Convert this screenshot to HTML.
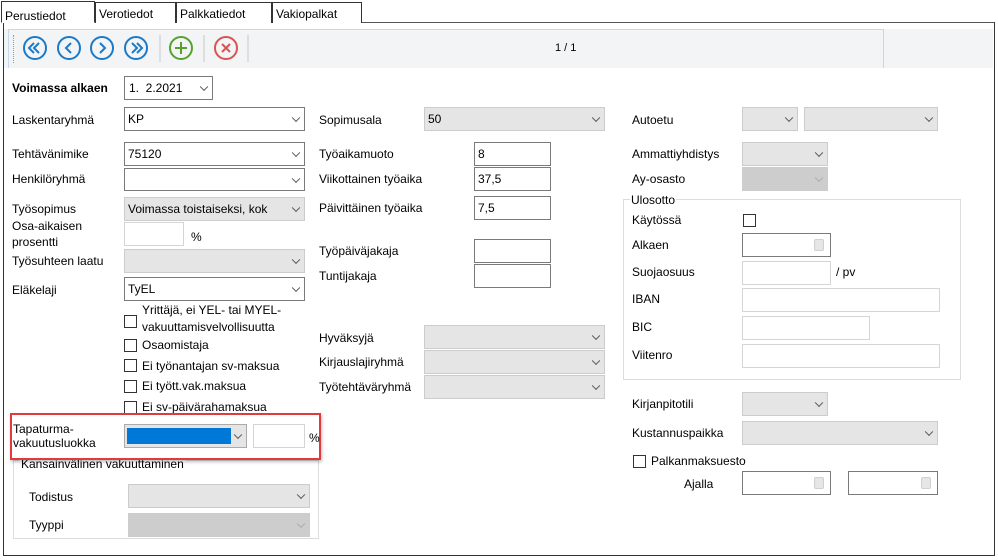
<!DOCTYPE html>
<html><head><meta charset="utf-8"><style>
*{box-sizing:border-box;margin:0;padding:0}
body{width:998px;height:560px;background:#fff;position:relative;overflow:hidden;font-family:"Liberation Sans",Arial,sans-serif;font-size:12px;color:#000}
div,span,i{position:absolute}
.l{white-space:nowrap;line-height:14px}
.b{border:1px solid #7a7a7a;background:#fff}
.d{border:1px solid #cccccc;background:#e5e5e5}
.dd{border:1px solid #cccccc;background:#cdcdcd}
.t{border:1px solid #7a7a7a;background:#fff}
.tl{border:1px solid #d5d5d5;background:#fff}
.v{right:5px;top:50%;width:6px;height:6px;border-right:1px solid #555;border-bottom:1px solid #555;transform:translateY(-70%) rotate(45deg)}
.dd .v{border-color:#aaa}
.x{left:3px;top:4px;line-height:14px;white-space:nowrap}
.c{width:13px;height:13px;border:1px solid #333;background:#fff}
.tab{top:2px;height:21px;border:1px solid #333;border-bottom:none;padding:4px 3px;background:#fff}
.cal{right:6px;top:5px;width:10px;height:12px;background:#e6e6e6;border:1px solid #d0d0d0;border-radius:2px}
</style></head><body>
<div style="left:3px;top:22px;width:992px;height:534px;border:1px solid #333;border-top:1px solid #555"></div>
<div class="tab" style="left:1px;top:1px;width:94px;height:22px;border-bottom:1px solid #fff;padding-top:7px">Perustiedot</div>
<div class="tab" style="left:95px;width:81px">Verotiedot</div>
<div class="tab" style="left:176px;width:96px">Palkkatiedot</div>
<div class="tab" style="left:272px;width:90px">Vakiopalkat</div>
<div style="left:4px;top:29px;width:989px;height:39px;background:#f3f4f6"></div>
<div style="left:8px;top:29px;width:876px;height:39px;border:1px solid #c6d6ec;border-bottom:none;background:#f3f4f6"></div>
<div style="left:13px;top:35px;height:28px;border-left:1px dotted #999"></div>
<svg style="position:absolute;left:0;top:0" width="998" height="80">
<g fill="none" stroke="#1a7ac8" stroke-width="2">
<circle cx="35" cy="48" r="11"/><circle cx="69" cy="48" r="11"/><circle cx="102" cy="48" r="11"/><circle cx="136" cy="48" r="11"/>
<path d="M34 43l-5 5 5 5M39 43l-5 5 5 5"/>
<path d="M71 43l-5 5 5 5"/>
<path d="M100 43l5 5-5 5"/>
<path d="M132 43l5 5-5 5M137 43l5 5-5 5"/>
</g>
<circle cx="181" cy="48" r="11" fill="none" stroke="#5aa02c" stroke-width="2"/>
<path d="M181 42v12M175 48h12" stroke="#5aa02c" stroke-width="2"/>
<circle cx="226" cy="48" r="11" fill="none" stroke="#d9534f" stroke-width="2"/>
<path d="M222 44l8 8M230 44l-8 8" stroke="#d9534f" stroke-width="2"/>
<path d="M160 35v27M204 35v27M248 35v27" stroke="#c8c8c8" stroke-width="1"/>
</svg>
<span class="l" style="left:555px;top:41px;font-size:11px">1 / 1</span>

<span class="l" style="left:12px;top:81px;font-weight:bold">Voimassa alkaen</span>
<div class="b" style="left:124px;top:76px;width:89px;height:24px"><span class="x" style="left:4px;top:4px">1.&nbsp; 2.2021</span><i class="v"></i></div>
<span class="l" style="left:12px;top:113px">Laskentaryhmä</span>
<div class="b" style="left:124px;top:107px;width:181px;height:24px"><span class="x">KP</span><i class="v"></i></div>
<span class="l" style="left:12px;top:147px">Tehtävänimike</span>
<div class="b" style="left:124px;top:142px;width:181px;height:24px"><span class="x">75120</span><i class="v"></i></div>
<span class="l" style="left:12px;top:172px">Henkilöryhmä</span>
<div class="b" style="left:124px;top:168px;width:181px;height:23px"><i class="v"></i></div>
<span class="l" style="left:12px;top:202px">Työsopimus</span>
<div class="d" style="left:124px;top:197px;width:181px;height:24px"><span class="x">Voimassa toistaiseksi, kok</span><i class="v"></i></div>
<span class="l" style="left:12px;top:219px">Osa-aikaisen</span>
<span class="l" style="left:12px;top:235px">prosentti</span>
<div class="tl" style="left:124px;top:222px;width:60px;height:24px"></div>
<span class="l" style="left:191px;top:230px">%</span>
<span class="l" style="left:12px;top:254px">Työsuhteen laatu</span>
<div class="d" style="left:124px;top:249px;width:181px;height:24px"><i class="v"></i></div>
<span class="l" style="left:12px;top:283px">Eläkelaji</span>
<div class="b" style="left:124px;top:277px;width:181px;height:24px"><span class="x">TyEL</span><i class="v"></i></div>
<div class="c" style="left:124px;top:315px"></div>
<span class="l" style="left:142px;top:303px">Yrittäjä, ei YEL- tai MYEL-</span>
<span class="l" style="left:142px;top:320px">vakuuttamisvelvollisuutta</span>
<div class="c" style="left:124px;top:339px"></div><span class="l" style="left:142px;top:338px">Osaomistaja</span>
<div class="c" style="left:124px;top:359px"></div><span class="l" style="left:142px;top:359px">Ei työnantajan sv-maksua</span>
<div class="c" style="left:124px;top:380px"></div><span class="l" style="left:142px;top:379px">Ei tyött.vak.maksua</span>
<div class="c" style="left:124px;top:401px"></div><span class="l" style="left:142px;top:400px">Ei sv-päivärahamaksua</span>

<div style="left:13px;top:460px;width:306px;height:79px;border:1px solid #dcdcdc"></div>
<span class="l" style="left:19px;top:457px;background:#fff;padding:0 2px">Kansainvälinen vakuuttaminen</span>
<div style="left:10px;top:413px;width:311px;height:47px;border:2px solid #e0393e;background:#fff;box-shadow:1px 2px 3px rgba(0,0,0,.25)"></div>
<span class="l" style="left:13px;top:422px">Tapaturma-</span>
<span class="l" style="left:13px;top:436px">vakuutusluokka</span>
<div class="d" style="left:124px;top:424px;width:123px;height:24px;border-color:#aaa"><div style="left:2px;top:3px;width:104px;height:16px;background:#0078d7"></div><i class="v"></i></div>
<div class="tl" style="left:253px;top:424px;width:52px;height:24px"></div>
<span class="l" style="left:309px;top:431px">%</span>
<span class="l" style="left:29px;top:490px">Todistus</span>
<div class="d" style="left:128px;top:484px;width:182px;height:24px"><i class="v"></i></div>
<span class="l" style="left:29px;top:518px">Tyyppi</span>
<div class="dd" style="left:128px;top:513px;width:182px;height:24px"><i class="v"></i></div>

<span class="l" style="left:319px;top:113px">Sopimusala</span>
<div class="d" style="left:424px;top:107px;width:181px;height:24px"><span class="x">50</span><i class="v"></i></div>
<span class="l" style="left:319px;top:147px">Työaikamuoto</span>
<div class="t" style="left:474px;top:142px;width:77px;height:24px"><span class="x">8</span></div>
<span class="l" style="left:319px;top:172px">Viikottainen työaika</span>
<div class="t" style="left:474px;top:167px;width:77px;height:24px"><span class="x">37,5</span></div>
<span class="l" style="left:319px;top:201px">Päivittäinen työaika</span>
<div class="t" style="left:474px;top:196px;width:77px;height:24px"><span class="x">7,5</span></div>
<span class="l" style="left:319px;top:244px">Työpäiväjakaja</span>
<div class="t" style="left:474px;top:239px;width:77px;height:24px"></div>
<span class="l" style="left:319px;top:269px">Tuntijakaja</span>
<div class="t" style="left:474px;top:264px;width:77px;height:24px"></div>
<span class="l" style="left:319px;top:331px">Hyväksyjä</span>
<div class="d" style="left:424px;top:325px;width:181px;height:24px"><i class="v"></i></div>
<span class="l" style="left:319px;top:355px">Kirjauslajiryhmä</span>
<div class="d" style="left:424px;top:350px;width:181px;height:24px"><i class="v"></i></div>
<span class="l" style="left:319px;top:380px">Työtehtäväryhmä</span>
<div class="d" style="left:424px;top:375px;width:181px;height:24px"><i class="v"></i></div>

<span class="l" style="left:632px;top:113px">Autoetu</span>
<div class="d" style="left:742px;top:107px;width:56px;height:24px"><i class="v"></i></div>
<div class="d" style="left:804px;top:107px;width:134px;height:24px"><i class="v"></i></div>
<span class="l" style="left:632px;top:147px">Ammattiyhdistys</span>
<div class="d" style="left:742px;top:142px;width:86px;height:24px"><i class="v"></i></div>
<span class="l" style="left:632px;top:172px">Ay-osasto</span>
<div class="dd" style="left:742px;top:167px;width:86px;height:24px"><i class="v"></i></div>
<div style="left:623px;top:199px;width:338px;height:181px;border:1px solid #dcdcdc"></div>
<span class="l" style="left:630px;top:193px;background:#fff;padding:0 1px">Ulosotto</span>
<span class="l" style="left:632px;top:213px">Käytössä</span>
<div class="c" style="left:743px;top:214px"></div>
<span class="l" style="left:632px;top:238px">Alkaen</span>
<div class="t" style="left:742px;top:233px;width:89px;height:24px"><i class="cal"></i></div>
<span class="l" style="left:632px;top:265px">Suojaosuus</span>
<div class="tl" style="left:742px;top:261px;width:89px;height:24px"></div>
<span class="l" style="left:836px;top:265px">/ pv</span>
<span class="l" style="left:632px;top:292px">IBAN</span>
<div class="tl" style="left:742px;top:288px;width:198px;height:24px"></div>
<span class="l" style="left:632px;top:320px">BIC</span>
<div class="tl" style="left:742px;top:316px;width:128px;height:24px"></div>
<span class="l" style="left:632px;top:348px">Viitenro</span>
<div class="tl" style="left:742px;top:344px;width:198px;height:24px"></div>
<span class="l" style="left:632px;top:397px">Kirjanpitotili</span>
<div class="d" style="left:742px;top:392px;width:86px;height:24px"><i class="v"></i></div>
<span class="l" style="left:632px;top:426px">Kustannuspaikka</span>
<div class="d" style="left:742px;top:421px;width:196px;height:24px"><i class="v"></i></div>
<div class="c" style="left:633px;top:455px"></div>
<span class="l" style="left:651px;top:454px">Palkanmaksuesto</span>
<span class="l" style="left:684px;top:477px">Ajalla</span>
<div class="t" style="left:742px;top:471px;width:89px;height:24px"><i class="cal"></i></div>
<div class="t" style="left:848px;top:471px;width:90px;height:24px"><i class="cal"></i></div>
</body></html>
